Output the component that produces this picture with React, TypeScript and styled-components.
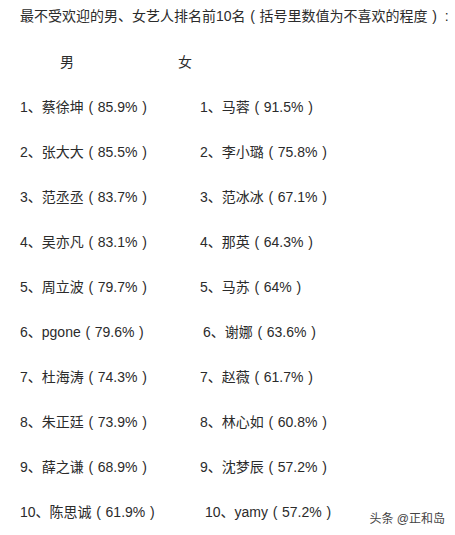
import React from 'react'
import styled, { createGlobalStyle } from 'styled-components'

const GlobalStyle = createGlobalStyle`
  html, body {
    margin: 0;
    padding: 0;
    background: #fff;
  }
  body {
    font-family: "Liberation Sans", "Noto Sans CJK SC", sans-serif;
    color: #2b2b2b;
  }
`

interface Entry {
  name: string;
  value: string;
}

const men: Entry[] = [
  { name: '蔡徐坤', value: '85.9%' },
  { name: '张大大', value: '85.5%' },
  { name: '范丞丞', value: '83.7%' },
  { name: '吴亦凡', value: '83.1%' },
  { name: '周立波', value: '79.7%' },
  { name: 'pgone', value: '79.6%' },
  { name: '杜海涛', value: '74.3%' },
  { name: '朱正廷', value: '73.9%' },
  { name: '薛之谦', value: '68.9%' },
  { name: '陈思诚', value: '61.9%' },
]

const women: Entry[] = [
  { name: '马蓉', value: '91.5%' },
  { name: '李小璐', value: '75.8%' },
  { name: '范冰冰', value: '67.1%' },
  { name: '那英', value: '64.3%' },
  { name: '马苏', value: '64%' },
  { name: '谢娜', value: '63.6%' },
  { name: '赵薇', value: '61.7%' },
  { name: '林心如', value: '60.8%' },
  { name: '沈梦辰', value: '57.2%' },
  { name: 'yamy', value: '57.2%' },
]

// the female column drifts a few px right on some lines in the original
const womenShift = [0, 0, 0, 0, 0, 3, 0, 0, 0, 5]

const Item = ({ n, e, shift }: { n: number; e: Entry; shift?: number }) => (
  <Cell $shift={shift}>
    {n}、{e.name}<Paren>(</Paren>{e.value}<Paren>)</Paren>
  </Cell>
)

export default function App() {
  return (
    <>
      <GlobalStyle />
      <Page>
        <Title>
          最不受欢迎的男、女艺人排名前10名<Paren>(</Paren>括号里数值为不喜欢的程度<Paren>)</Paren><Colon>:</Colon>
        </Title>
        <List>
          <Row>
            <Head $indent={40}>男</Head>
            <Head $indent={-22}>女</Head>
          </Row>
          {men.map((m, i) => (
            <Row key={i}>
              <Item n={i + 1} e={m} />
              <Item n={i + 1} e={women[i]} shift={womenShift[i]} />
            </Row>
          ))}
        </List>
        <Watermark>头条 @正和岛</Watermark>
      </Page>
    </>
  )
}

const Page = styled.div`
  position: relative;
  width: 455px;
  height: 535px;
  box-sizing: border-box;
  padding: 4px 0 0 20px;
  overflow: hidden;
`

const Title = styled.div`
  font-size: 14px;
  line-height: 24px;
  white-space: nowrap;
  margin-bottom: 10px;
`

const Paren = styled.span`
  display: inline-block;
  width: 14px;
  text-align: center;
`

const Colon = styled.span`
  display: inline-block;
  width: 10px;
  text-align: center;
`

const List = styled.div`
  display: flex;
  flex-direction: column;
`

const Row = styled.div`
  display: grid;
  grid-template-columns: 180px auto;
  height: 45px;
  align-items: center;
`

const Head = styled.div<{ $indent: number }>`
  font-size: 14px;
  padding-left: ${p => Math.max(p.$indent, 0)}px;
  margin-left: ${p => Math.min(p.$indent, 0)}px;
`

const Cell = styled.div<{ $shift?: number }>`
  font-size: 14px;
  white-space: nowrap;
  padding-left: ${p => p.$shift || 0}px;
`

const Watermark = styled.div`
  position: absolute;
  right: 10px;
  bottom: 9px;
  font-size: 12px;
  color: #444;
  text-shadow: 0 0 2px #fff, 0 0 2px #fff;
`
